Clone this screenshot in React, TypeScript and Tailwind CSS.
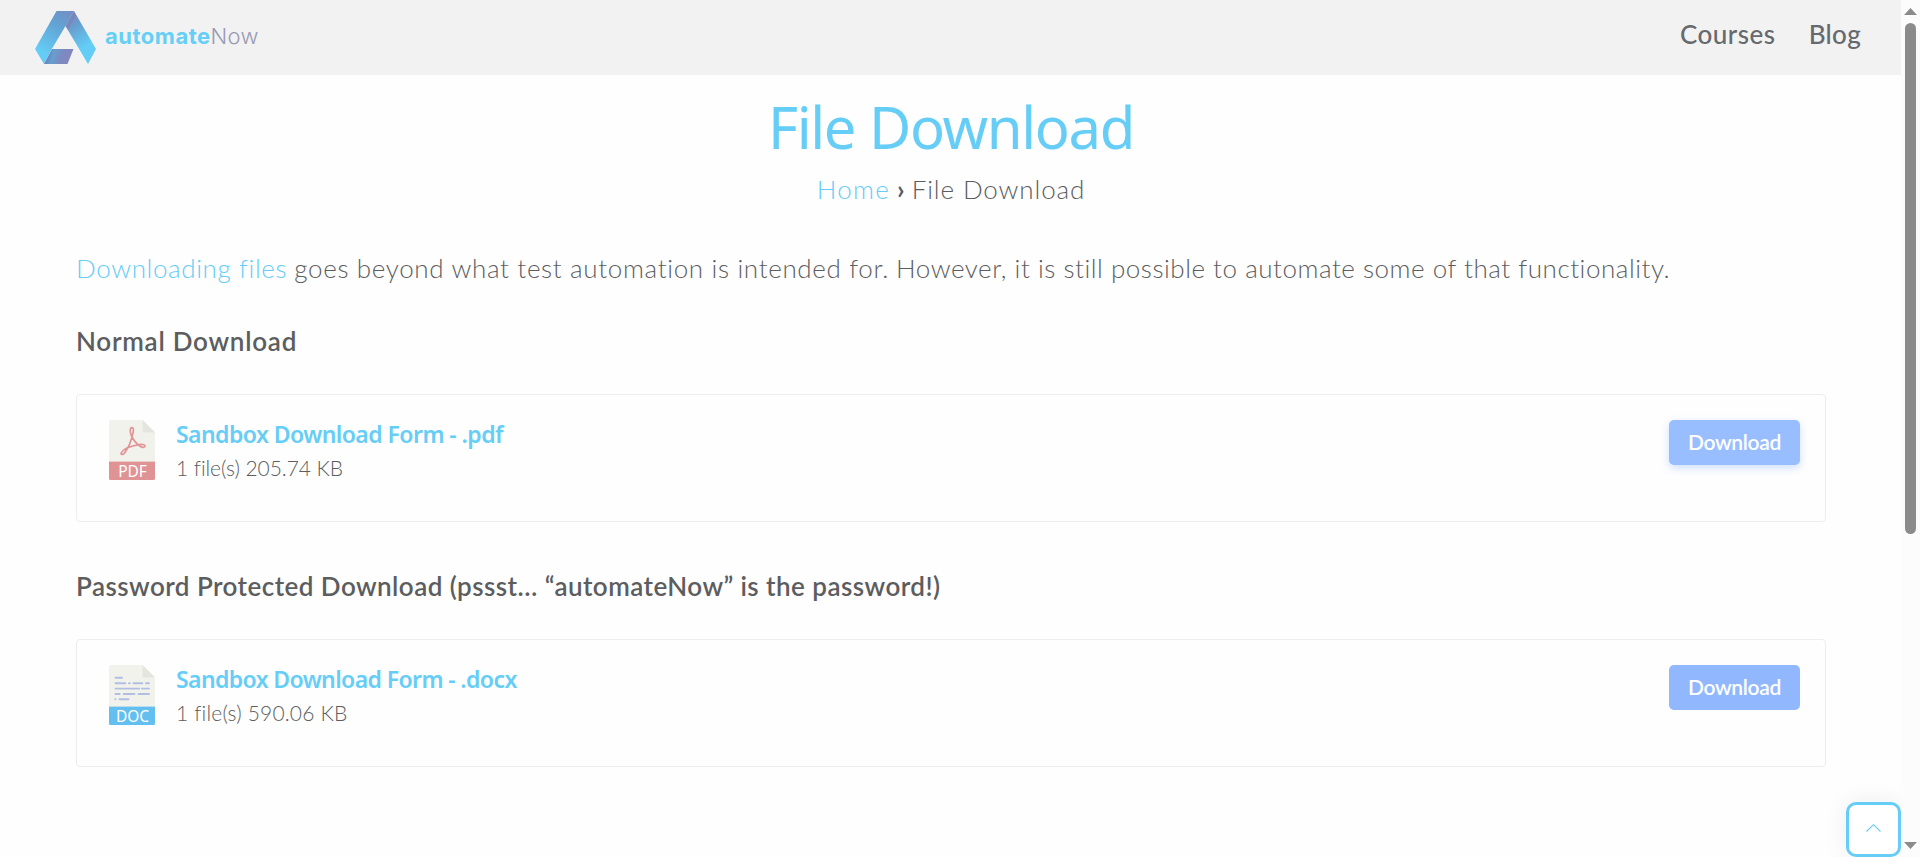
import type { ReactNode } from "react";

function Logo() {
  return (
    <a className="flex items-start">
      <svg width="61" height="53" viewBox="0 0 61 53" className="block">
        <defs>
          <linearGradient id="left" gradientUnits="userSpaceOnUse" x1="32" y1="0" x2="8" y2="42">
            <stop offset="0" stopColor="#7090c6" />
            <stop offset="0.35" stopColor="#62a3d3" />
            <stop offset="1" stopColor="#64cdf6" />
          </linearGradient>
          <linearGradient id="right" gradientUnits="userSpaceOnUse" x1="33" y1="6" x2="56" y2="42">
            <stop offset="0" stopColor="#7c87bd" />
            <stop offset="0.3" stopColor="#66a2d2" />
            <stop offset="0.8" stopColor="#63cdf6" />
          </linearGradient>
          <linearGradient id="foot" gradientUnits="userSpaceOnUse" x1="12" y1="44" x2="28" y2="49">
            <stop offset="0" stopColor="#6a7fb8" />
            <stop offset="0.35" stopColor="#659fd0" />
            <stop offset="0.9" stopColor="#7f88bf" />
          </linearGradient>
        </defs>
        <path d="M21.5 0H39L30.5 15L16.5 38.5L9 53L0 38Z" fill="url(#left)" />
        <path d="M39 0L61 38L53 53L30.5 15Z" fill="url(#right)" />
        <path d="M39 0L40 6L33 19L30.5 15Z" fill="#7b80b4" opacity="0.55" />
        <path d="M17 38H38.5L32.5 53H9Z" fill="url(#foot)" />
      </svg>
      <span className="ml-[9px] mt-[12px] flex font-['Inter',sans-serif] text-[22px] leading-[26px] whitespace-nowrap">
        <span className="font-bold tracking-[0.5px] text-[#66cff6]">automate</span>
        <span className="font-light tracking-[0.3px] text-[#9a9bb4]">Now</span>
      </span>
    </a>
  );
}

function Sheet({ label, color, children }: { label: string; color: string; children: ReactNode }) {
  return (
    <svg width="46" height="60" viewBox="0 0 46 60" className="block shrink-0">
      <path d="M2 0H33.5L46 12.5V42H0V2Q0 0 2 0Z" fill="#f1f2ec" />
      <path d="M33.5 0L46 12.5H33.5Z" fill="#e5e5df" />
      <rect y="41" width="46" height="1" fill={color} opacity="0.4" />
      <path d="M0 42H46V58.5Q46 60 44.5 60H1.5Q0 60 0 58.5Z" fill={color} />
      {children}
      <text
        x="23.5"
        y="57"
        textAnchor="middle"
        fill="#ffffff"
        className="font-['Noto_Sans',sans-serif] text-[15.5px] font-normal"
      >
        {label}
      </text>
    </svg>
  );
}

function PdfIcon() {
  return (
    <Sheet label="PDF" color="#df9395">
      <path
        d="M23 7.7C20.3 7.7 21 13 23 17.5C21.5 23 18.5 29 15.8 32.8C14 35.3 11.2 34.6 12.4 32.6C14.5 29.2 22 26 30 24.7C34 24 36.8 24.8 35.8 26.6C34.8 28.2 31.5 27 29.2 24.8C26 22 24.2 19.5 23 16.8C24.5 12 25.2 7.7 23 7.7Z"
        fill="none"
        stroke="#e29496"
        strokeWidth="1.7"
        strokeLinejoin="round"
      />
    </Sheet>
  );
}

function DocIcon() {
  return (
    <Sheet label="DOC" color="#63bff0">
      <path
        d="M6.5 12.8H13M6.5 18.3H16.3M20 18.3H20.8M24.5 18.3H33.3M37 18.3H40M6.5 23.6H30.3M33 23.6H40M6.5 29H10.7M14.7 29H25.5M29.5 29H40M6.3 34.2H6.5M10.5 34.2H19.5"
        fill="none"
        stroke="#b3bfe2"
        strokeWidth="1.9"
        strokeLinecap="round"
      />
    </Sheet>
  );
}

function DownloadCard({
  icon,
  title,
  meta,
  button,
}: {
  icon: ReactNode;
  title: ReactNode;
  meta: ReactNode;
  button: string;
}) {
  return (
    <div className="mt-[37px] flex h-[128px] items-start rounded-[4px] border border-[#ededee] pt-[25px] pr-[25px] pl-8">
      {icon}
      <div className="ml-[21px] flex-1 pt-px">
        <div className="font-['Noto_Sans',sans-serif] text-[23px] leading-[27px] font-semibold text-[#66cdf6]">
          {title}
        </div>
        <div className="mt-[7px] text-[21px] leading-[26px] font-light">{meta}</div>
      </div>
      <button
        className={`flex h-[45px] w-[131px] justify-center rounded-[5px] pt-[9px] text-[21px] leading-[26px] font-semibold tracking-[-0.3px] text-white ${button}`}
      >
        Download
      </button>
    </div>
  );
}

function Scrollbar() {
  return (
    <div className="flex h-full w-[19px] shrink-0 flex-col items-center bg-[#fcfcfc]">
      <svg width="13" height="7" viewBox="0 0 13 7" className="mt-2 block">
        <path d="M6.5 0L13 7H0Z" fill="#8b8b8b" />
      </svg>
      <div className="mt-2 h-[511px] w-[11px] rounded-full bg-[#8b8b8b]" />
      <svg width="13" height="7" viewBox="0 0 13 7" className="mt-auto mb-2 block">
        <path d="M0 0H13L6.5 7Z" fill="#8b8b8b" />
      </svg>
    </div>
  );
}

export default function App() {
  return (
    <div className="flex h-[857px] w-[1920px] overflow-hidden bg-white font-['Lato',sans-serif] text-[#5c5d5f]">
      <div className="relative flex h-full w-[1901px] flex-col overflow-hidden bg-[#fefefe]">
        <header className="flex h-[75px] items-start justify-between bg-[#f2f2f2] pt-[11px] pr-[40px] pl-[35px]">
          <Logo />
          <nav className="mt-[7px] flex gap-[33px] text-[26px] leading-8 font-medium text-[#66696d]">
            <a className="tracking-[0.5px]">Courses</a>
            <a className="tracking-[0.3px]">Blog</a>
          </nav>
        </header>

        <main className="flex flex-col pr-[75px] pl-[76px]">
          <h1 className="mt-[20px] text-center font-['Noto_Sans',sans-serif] text-[58px] leading-[64px] font-normal tracking-[-1.35px] text-[#66cdf6]">
            File Download
          </h1>
          <nav className="mt-[14px] flex justify-center text-[26px] leading-8 font-light">
            <a className="tracking-[1.3px] text-[#66cdf6]">Home</a>
            <span className="mx-[7px] font-bold">›</span>
            <span className="tracking-[0.9px]">File Download</span>
          </nav>

          <p className="mt-[47px] text-[26px] leading-8 font-light whitespace-nowrap">
            <a className="tracking-[0.62px] text-[#66cdf6]">Downloading files</a>{" "}
            <span className="tracking-[0.66px]">goes beyond what test automation is intended for.</span>{" "}
            <span className="tracking-[0.53px]">
              However, it is still possible to automate some of that functionality.
            </span>
          </p>

          <h2 className="mt-[41px] text-[26px] leading-8 font-semibold tracking-[0.75px]">Normal Download</h2>
          <DownloadCard
            icon={<PdfIcon />}
            title={<span className="tracking-[-0.56px]">Sandbox Download Form - .pdf</span>}
            meta={<span className="tracking-[-0.05px]">1 file(s) 205.74 KB</span>}
            button="bg-[#99beff] shadow-[0_3px_8px_rgba(80,140,255,0.28)]"
          />

          <h2 className="mt-[48px] text-[26px] leading-8 font-semibold tracking-[0.45px]">
            Password Protected Download (pssst… “automateNow” is the password!)
          </h2>
          <DownloadCard
            icon={<DocIcon />}
            title={<span className="tracking-[-0.61px]">Sandbox Download Form - .docx</span>}
            meta={<span className="tracking-[0.18px]">1 file(s) 590.06 KB</span>}
            button="bg-[#91b8ff]"
          />
        </main>

        <button className="absolute right-0 bottom-0 flex h-[55px] w-[55px] items-center justify-center rounded-[10px] border-3 border-[#66cdf6] bg-white shadow-[0_0_24px_rgba(0,0,0,0.07)]">
          <svg width="15" height="8" viewBox="0 0 15 8" className="mb-1 block">
            <path d="M0.5 7.5L7.5 0.7L14.5 7.5" fill="none" stroke="#66cdf6" strokeWidth="1.1" />
          </svg>
        </button>
      </div>
      <Scrollbar />
    </div>
  );
}
